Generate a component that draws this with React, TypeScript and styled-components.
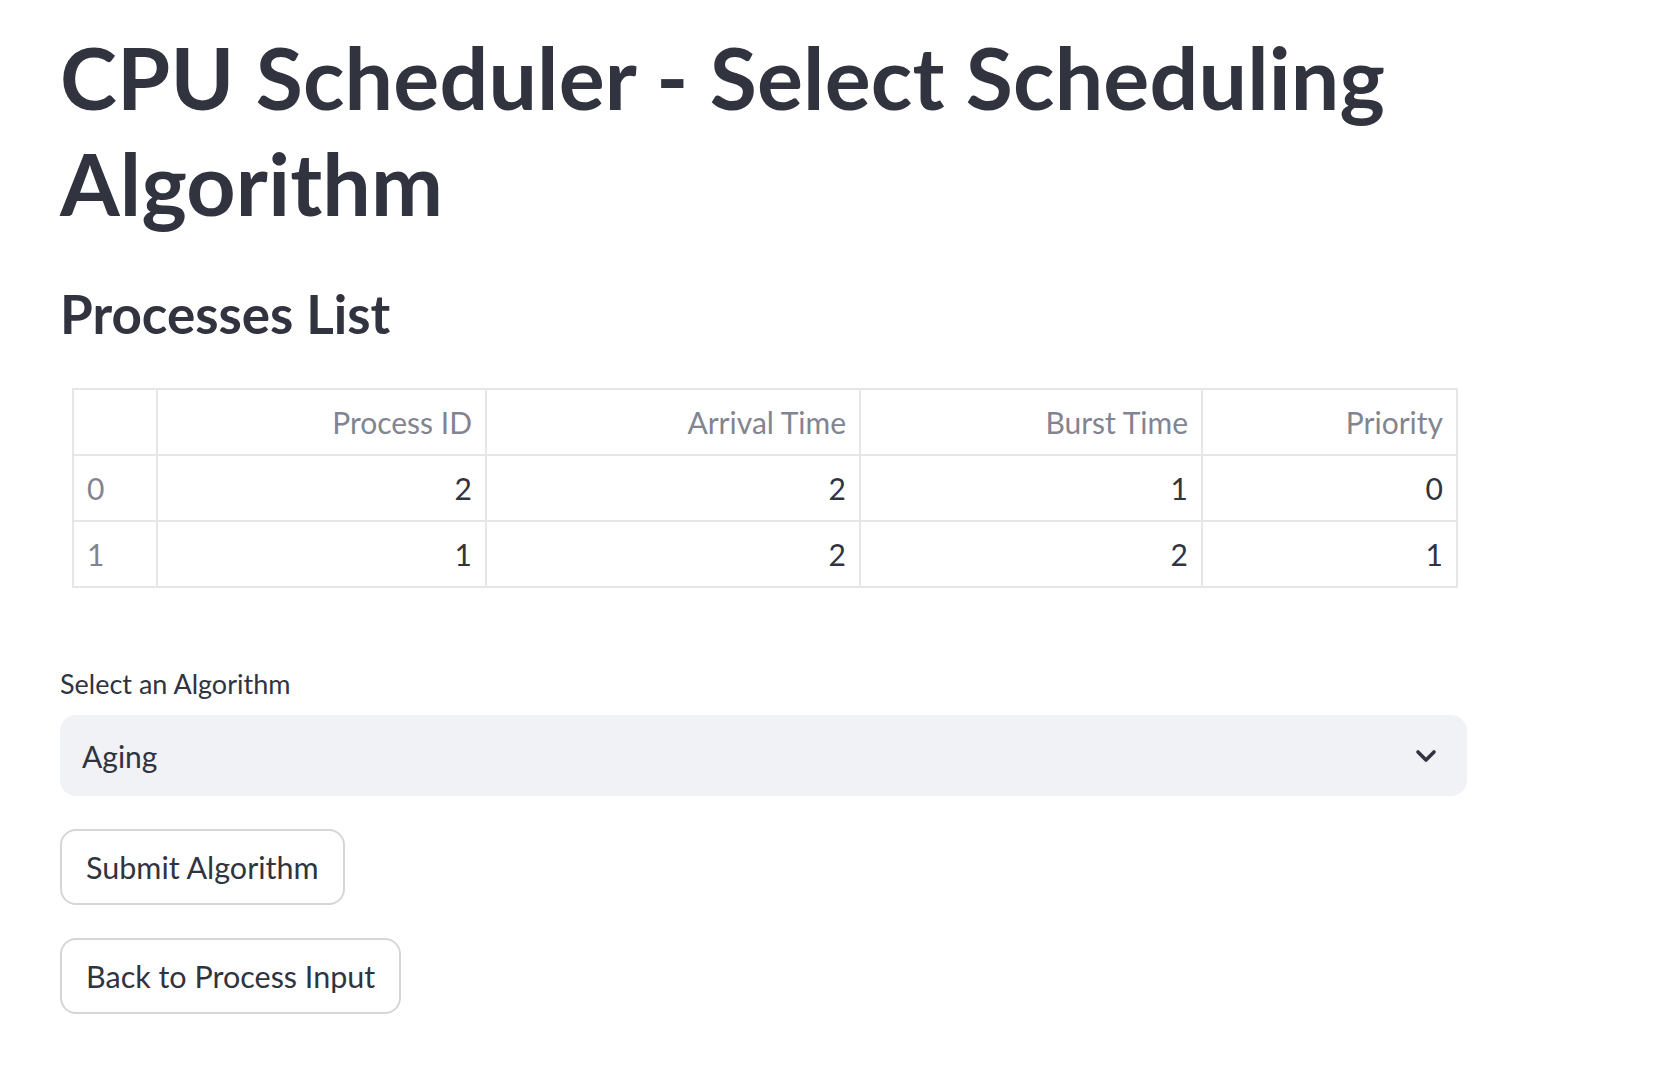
import React from "react";
import styled, { createGlobalStyle } from "styled-components";

const Global = createGlobalStyle`
  html, body { margin: 0; padding: 0; background: #ffffff; }
  body { font-family: "Lato", "Liberation Sans", sans-serif; color: #31333f; }
`;

const Main = styled.main`
  width: 1407px;
  margin-left: 60px;
  padding-top: 24px;
  display: flex;
  flex-direction: column;
`;

const Title = styled.h1`
  margin: 0;
  font-size: 86px;
  line-height: 106px;
  font-weight: 700;
  color: #31333f;
  letter-spacing: 0.2px;
`;

const Subheader = styled.h3`
  margin: 46px 0 0 0;
  font-size: 53px;
  line-height: 64px;
  font-weight: 700;
  color: #31333f;
`;

const Table = styled.table`
  margin: 42px 0 0 12px;
  width: 1384px;
  border-collapse: collapse;
  font-size: 30px;
  table-layout: fixed;
`;

const Cell = styled.td<{ $head?: boolean; $index?: boolean }>`
  border: 2px solid #e6e6e8;
  height: 64px;
  padding: 0 13px;
  text-align: ${(p) => (p.$index ? "left" : "right")};
  color: ${(p) => (p.$head || p.$index ? "#828591" : "#31333f")};
  font-weight: 400;
  white-space: nowrap;
`;

const Label = styled.label`
  margin-top: 79px;
  font-size: 27px;
  line-height: 34px;
  color: #31333f;
`;

const SelectBox = styled.div`
  margin-top: 14px;
  height: 81px;
  background: #f0f2f6;
  border-radius: 16px;
  display: flex;
  align-items: center;
  justify-content: space-between;
  padding: 0 30px 0 22px;
  font-size: 30px;
  color: #31333f;
`;

const Button = styled.button`
  align-self: flex-start;
  margin-top: 33px;
  height: 76px;
  padding: 0 24px;
  border: 2px solid #d6d6d9;
  border-radius: 16px;
  background: #ffffff;
  font-family: inherit;
  font-size: 30.5px;
  color: #31333f;
`;

const cols = ["", "Process ID", "Arrival Time", "Burst Time", "Priority"];
const widths = [84, 329, 374, 342, 255];
const rows = [
  [0, 2, 2, 1, 0],
  [1, 1, 2, 2, 1],
];

export default function App() {
  return (
    <>
      <Global />
      <Main>
        <Title>CPU Scheduler - Select Scheduling Algorithm</Title>
        <Subheader>Processes List</Subheader>
        <Table>
          <colgroup>
            {widths.map((w, i) => (
              <col key={i} style={{ width: w }} />
            ))}
          </colgroup>
          <thead>
            <tr>
              {cols.map((c, i) => (
                <Cell as="th" key={i} $head>
                  {c}
                </Cell>
              ))}
            </tr>
          </thead>
          <tbody>
            {rows.map((r) => (
              <tr key={r[0]}>
                {r.map((v, i) => (
                  <Cell key={i} $index={i === 0}>
                    {v}
                  </Cell>
                ))}
              </tr>
            ))}
          </tbody>
        </Table>
        <Label>Select an Algorithm</Label>
        <SelectBox>
          <span>Aging</span>
          <svg width="22" height="14" viewBox="0 0 22 14" fill="none">
            <path d="M3 3l8 8 8-8" stroke="#31333f" strokeWidth="3.6" strokeLinecap="round" strokeLinejoin="round" />
          </svg>
        </SelectBox>
        <Button>Submit Algorithm</Button>
        <Button>Back to Process Input</Button>
      </Main>
    </>
  );
}
